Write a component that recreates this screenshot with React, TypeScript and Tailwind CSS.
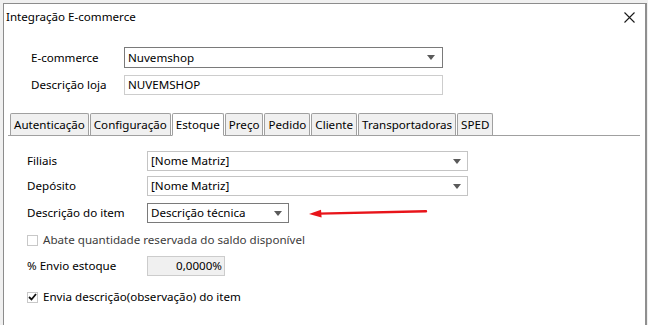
import React from 'react'

const font = { fontFamily: '"Segoe UI", "Noto Sans", "Open Sans", sans-serif' }

function Caret() {
  return (
    <svg width="8" height="5" viewBox="0 0 8 5" className="shrink-0">
      <path d="M0 0 H8 L4 5 Z" fill="#5a5a5a" />
    </svg>
  )
}

function Select({ value, width, dark }: { value: string; width: string; dark?: boolean }) {
  return (
    <div
      className={`${width} h-[20px] flex items-center justify-between pl-[3px] pr-[6px] bg-white border ${
        dark ? 'border-[#7a7a7a]' : 'border-[#c4c4c4]'
      }`}
    >
      <span>{value}</span>
      <Caret />
    </div>
  )
}

const tabs = ['Autenticação', 'Configuração', 'Estoque', 'Preço', 'Pedido', 'Cliente', 'Transportadoras', 'SPED']

export default function App() {
  return (
    <div
      className="w-[648px] h-[325px] overflow-hidden bg-[#f0f0f0] pt-[3px] pl-[3px] text-[11.6px] text-black leading-none"
      style={font}
    >
      <div className="w-[644px] h-[330px] bg-white border-t border-l border-[#8c8c8c] border-r-2 border-r-[#8f8f8f]">
        {/* title bar */}
        <div className="h-[26px] flex items-center justify-between pl-[2px] pr-[10px]">
          <span>Integração E-commerce</span>
          <svg width="11" height="11" viewBox="0 0 11 11">
            <path d="M0.5 0.5 L10.5 10.5 M10.5 0.5 L0.5 10.5" stroke="#1a1a1a" strokeWidth="1.1" />
          </svg>
        </div>

        {/* header fields */}
        <div className="pl-[27px] pt-[17px] flex flex-col gap-[7px]">
          <div className="flex items-center">
            <span className="w-[93px]">E-commerce</span>
            <div className="w-[319px] h-[21px] flex items-center justify-between pl-[3px] pr-[7px] border border-[#7a7a7a]">
              <span>Nuvemshop</span>
              <Caret />
            </div>
          </div>
          <div className="flex items-center">
            <span className="w-[93px]">Descrição loja</span>
            <div className="w-[319px] h-[20px] flex items-center pl-[3px] border border-[#cdcdcd]">NUVEMSHOP</div>
          </div>
        </div>

        {/* tabs */}
        <div className="mt-[18px] ml-[4px] w-[632px] h-[23px] flex items-end pl-[2px] border-b border-[#a0a0a0]">
          {tabs.map((t) => (
            <div
              key={t}
              className={`px-[3px] flex items-center mr-[1px] border border-[#a0a0a0] rounded-t-[2px] ${
                t === 'Estoque' ? 'bg-white border-b-white -mb-px h-[23px]' : 'h-[22px] bg-[#f0f0f0] border-b-0'
              }`}
            >
              {t}
            </div>
          ))}
        </div>

        {/* tab content */}
        <div className="pl-[23px] pt-[15px] flex flex-col">
          <div className="flex items-center h-[20px]">
            <span className="w-[120px]">Filiais</span>
            <Select value="[Nome Matriz]" width="w-[321px]" />
          </div>
          <div className="flex items-center h-[20px] mt-[5px]">
            <span className="w-[120px]">Depósito</span>
            <Select value="[Nome Matriz]" width="w-[321px]" />
          </div>
          <div className="flex items-center h-[20px] mt-[7px]">
            <span className="w-[120px]">Descrição do item</span>
            <Select value="Descrição técnica" width="w-[142px]" dark />
            <svg width="120" height="10" viewBox="0 0 120 10" className="ml-[20px]">
              <path d="M10 5.6 L117 3.2" stroke="#e8141a" strokeWidth="2.4" strokeLinecap="round" />
              <path d="M0 6 L12 1.8 L12.6 9.6 Z" fill="#e8141a" />
            </svg>
          </div>
          <div className="flex items-center h-[16px] mt-[9px]">
            <span className="w-[11px] h-[11px] border border-[#c8c8c8] bg-white" />
            <span className="ml-[5px] text-[#3c3c3c]">Abate quantidade reservada do saldo disponível</span>
          </div>
          <div className="flex items-center h-[20px] mt-[8px]">
            <span className="w-[120px]">% Envio estoque</span>
            <div className="w-[78px] h-[20px] flex items-center justify-end pr-[2px] bg-[#f0f0f0] border border-[#cccccc]">
              0,0000%
            </div>
          </div>
          <div className="flex items-center h-[16px] mt-[13px]">
            <span className="w-[11px] h-[11px] border border-[#c8c8c8] bg-white flex items-center justify-center">
              <svg width="9" height="8" viewBox="0 0 9 8">
                <path d="M1 4 L3.5 6.5 L8 1" stroke="#111" strokeWidth="1.8" fill="none" />
              </svg>
            </span>
            <span className="ml-[5px]">Envia descrição(observação) do item</span>
          </div>
        </div>
      </div>
    </div>
  )
}
